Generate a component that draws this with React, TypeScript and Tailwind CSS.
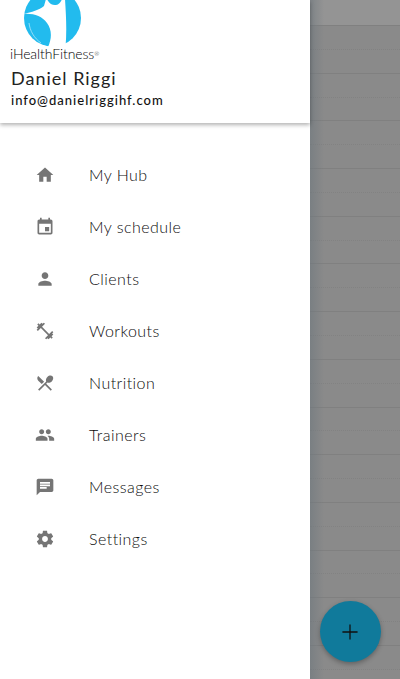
const NAV_ITEMS = [
  {
    label: "My Hub",
    icon: "M10 20v-6h4v6h5v-8h3L12 3 2 12h3v8z",
  },
  {
    label: "My schedule",
    icon: "M17 12h-5v5h5v-5zM16 1v2H8V1H6v2H5c-1.11 0-1.99.9-1.99 2L3 19c0 1.1.89 2 2 2h14c1.1 0 2-.9 2-2V5c0-1.1-.9-2-2-2h-1V1h-2zm3 18H5V8h14v11z",
  },
  {
    label: "Clients",
    icon: "M12 12c2.21 0 4-1.79 4-4s-1.79-4-4-4-4 1.79-4 4 1.79 4 4 4zm0 2c-2.67 0-8 1.34-8 4v2h16v-2c0-2.66-5.33-4-8-4z",
  },
  {
    label: "Workouts",
    icon: "M20.57 14.86L22 13.43 20.57 12 17 15.57 8.43 7 12 3.43 10.57 2 9.14 3.43 7.71 2 5.57 4.14 4.14 2.71 2.71 4.14l1.43 1.43L2 7.71l1.43 1.43L2 10.57 3.43 12 7 8.43 15.57 17 12 20.57 13.43 22l1.43-1.43L16.29 22l2.14-2.14 1.43 1.43 1.43-1.43-1.43-1.43L22 16.29z",
  },
  {
    label: "Nutrition",
    icon: "M8.1 13.34l2.83-2.83L3.91 3.5c-1.56 1.56-1.56 4.09 0 5.66l4.19 4.18zm6.78-1.81c1.53.71 3.68.21 5.27-1.38 1.91-1.91 2.28-4.65.81-6.12-1.46-1.46-4.2-1.1-6.12.81-1.59 1.59-2.09 3.74-1.38 5.27L3.7 19.87l1.41 1.41L12 14.41l6.88 6.88 1.41-1.41L13.41 13l1.47-1.47z",
  },
  {
    label: "Trainers",
    icon: "M16 11c1.66 0 2.99-1.34 2.99-3S17.66 5 16 5c-1.66 0-3 1.34-3 3s1.34 3 3 3zm-8 0c1.66 0 2.99-1.34 2.99-3S9.66 5 8 5C6.34 5 5 6.34 5 8s1.34 3 3 3zm0 2c-2.33 0-7 1.17-7 3.5V19h14v-2.5c0-2.33-4.67-3.5-7-3.5zm8 0c-.29 0-.62.02-.97.05 1.16.84 1.97 1.97 1.97 3.45V19h6v-2.5c0-2.33-4.67-3.5-7-3.5z",
  },
  {
    label: "Messages",
    icon: "M20 2H4c-1.1 0-1.99.9-1.99 2L2 22l4-4h14c1.1 0 2-.9 2-2V4c0-1.1-.9-2-2-2zM6 9h12v2H6V9zm8 5H6v-2h8v2zm4-6H6V6h12v2z",
  },
  {
    label: "Settings",
    icon: "M19.43 12.98c.04-.32.07-.64.07-.98s-.03-.66-.07-.98l2.11-1.65c.19-.15.24-.42.12-.64l-2-3.46c-.12-.22-.39-.3-.61-.22l-2.49 1c-.52-.4-1.08-.73-1.69-.98l-.38-2.65C14.46 2.18 14.25 2 14 2h-4c-.25 0-.46.18-.49.42l-.38 2.65c-.61.25-1.17.59-1.69.98l-2.49-1c-.23-.09-.49 0-.61.22l-2 3.46c-.13.22-.07.49.12.64l2.11 1.65c-.04.32-.07.65-.07.98s.03.66.07.98l-2.11 1.65c-.19.15-.24.42-.12.64l2 3.46c.12.22.39.3.61.22l2.49-1c.52.4 1.08.73 1.69.98l.38 2.65c.03.24.24.42.49.42h4c.25 0 .46-.18.49-.42l.38-2.65c.61-.25 1.17-.59 1.69-.98l2.49 1c.23.09.49 0 .61-.22l2-3.46c.12-.22.07-.49-.12-.64l-2.11-1.65zM12 15.5c-1.93 0-3.5-1.57-3.5-3.5s1.57-3.5 3.5-3.5 3.5 1.57 3.5 3.5-1.57 3.5-3.5 3.5z",
  },
];

function NavRow({ label, icon }: { label: string; icon: string }) {
  return (
    <div className="flex h-[52px] items-center pl-[35px]">
      <svg viewBox="0 0 24 24" className="h-5 w-5 shrink-0 fill-[#757575]">
        <path d={icon} />
      </svg>
      <span className="ml-[34px] pb-px text-[16px] tracking-[0.45px] font-light text-[#0c0c0c]">{label}</span>
    </div>
  );
}

function Logo() {
  return (
    <div className="h-[60px]">
      <svg viewBox="20 0 65 48" className="ml-[20px] block h-12 w-[65px]">
        <circle cx="52.5" cy="18" r="28.5" fill="#22bbee" />
        <path
          d="M23 14 C32 12 39 10 44 6 L46 -1 L65 -1 C66 15 67 30 65.5 47 L48 47 C52 38 52 30 47 23 C42 16 33 13 23 14 Z"
          fill="#fff"
        />
        <path d="M47 -1 C49 4 53 5.500 56 5 C59 4.500 61 2 62 -1 Z" fill="#22bbee" />
        <path d="M29 23 C30 31 34 38 41 43" fill="none" stroke="#bfeafa" strokeWidth="0.7" />
      </svg>
      <div className="-mt-px pl-[10px] text-[14px] leading-[13px] font-light tracking-[-0.1px] text-[#000]">
        iHealthFitness<sup className="text-[6px]">®</sup>
      </div>
    </div>
  );
}

export default function App() {
  return (
    <div className="flex h-[679px] w-[400px] overflow-hidden bg-[#8a8a8a] font-['Lato',sans-serif]">
      <aside className="relative z-10 h-full w-[310px] shrink-0 bg-white">
        <header className="h-[123px] bg-white shadow-[0_2px_4px_rgba(0,0,0,0.3)]">
          <Logo />
          <div className="pl-[11px]">
            <div className="mt-[7px] text-[18px] leading-[22px] tracking-[1px] text-[#222]">Daniel Riggi</div>
            <div className="mt-[2px] text-[13px] leading-[18px] font-medium tracking-[1px] text-[#111]">
              info@danielriggihf.com
            </div>
          </div>
        </header>
        <nav className="pt-[26px]">
          {NAV_ITEMS.map((item) => (
            <NavRow key={item.label} {...item} />
          ))}
        </nav>
      </aside>

      <main className="relative flex-1">
        <div className="h-[26px] border-b border-[#808080] bg-[#949494]" />
        {Array.from({ length: 27 }).map((_, i) => (
          <div
            key={i}
            className={
              i % 2 === 0
                ? "h-[23.85px] border-b border-dotted border-[#828282]"
                : "h-[23.85px] border-b border-[#808080]"
            }
          />
        ))}
        <div className="absolute inset-y-0 left-0 w-[14px] bg-gradient-to-r from-[#6f787e]/60 to-transparent" />
        <button className="absolute top-[601px] left-[10px] flex h-[61px] w-[61px] items-center justify-center rounded-full bg-[#107a9b] shadow-[0_2px_5px_rgba(0,0,0,0.3)]">
          <svg viewBox="0 0 24 24" className="h-[26px] w-[26px] -translate-x-px fill-[#111]">
            <path d="M19 12.6h-6.4V19h-1.2v-6.400H5v-1.200h6.400V5h1.200v6.400H19z" />
          </svg>
        </button>
      </main>
    </div>
  );
}
